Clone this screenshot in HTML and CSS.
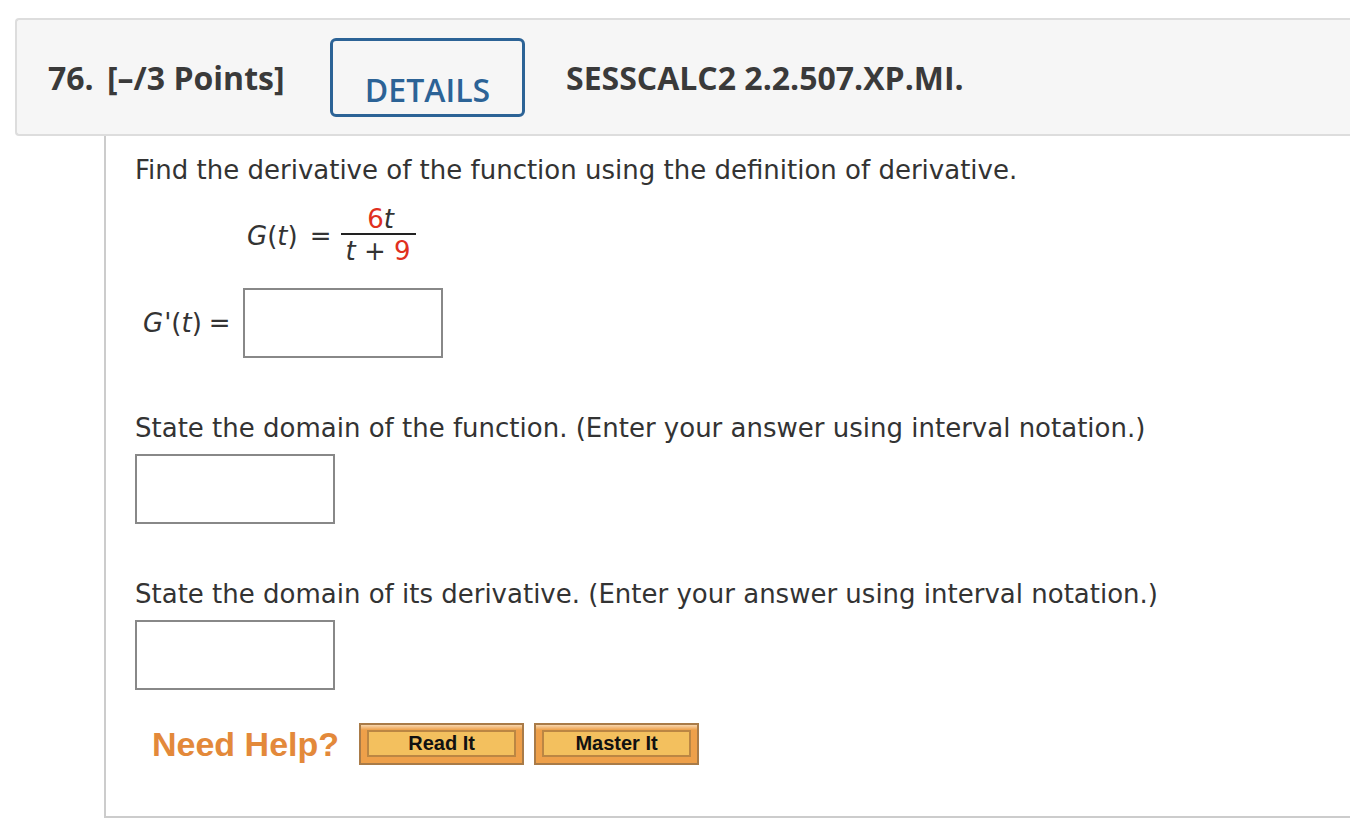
FILE: index.html
```html
<!DOCTYPE html>
<html>
<head>
<meta charset="utf-8">
<link rel="stylesheet" href="styles.css">
</head>
<body>
<div class="question">
  <div class="qhead">
    <span class="qnum">76.</span>
    <span class="qpts">[–/3 Points]</span>
    <span class="details">DETAILS</span>
    <span class="qref">SESSCALC2 2.2.507.XP.MI.</span>
  </div>
  <div class="qbody">
    <p class="prompt first">Find the derivative of the function using the definition of derivative.</p>
    <div class="eq">
      <span class="lhs"><span class="mi">G</span>(<span class="mi">t</span>)</span>
      <span class="eqsign">=</span>
      <span class="frac">
        <span class="num"><span class="red">6</span><span class="mi">t</span></span>
        <span class="den"><span class="mi">t</span> + <span class="red">9</span></span>
      </span>
    </div>
    <div class="answer-row">
      <span class="alhs"><span class="mi">G</span><span class="prime">'</span>(<span class="mi">t</span>)</span>
      <span class="eqsign">=</span>
      <span class="input"></span>
    </div>
    <p class="prompt gap">State the domain of the function. (Enter your answer using interval notation.)</p>
    <div class="input block"></div>
    <p class="prompt gap">State the domain of its derivative. (Enter your answer using interval notation.)</p>
    <div class="input block"></div>
    <div class="help">
      <span class="needhelp">Need Help?</span>
      <span class="btn"><span>Read It</span></span>
      <span class="btn"><span>Master It</span></span>
    </div>
  </div>
</div>
</body>
</html>
```
FILE: styles.css
```css
html, body {
  margin: 0;
  padding: 0;
  background: #ffffff;
}
.question {
  padding-top: 18px;
  padding-left: 15px;
}
.qhead {
  box-sizing: border-box;
  height: 118px;
  background: #f6f6f6;
  border: 2px solid #dddddd;
  border-right: none;
  border-radius: 4px 0 0 4px;
  display: flex;
  align-items: center;
  padding-left: 31px;
  font-family: "Open Sans", sans-serif;
  font-weight: 700;
  font-size: 32px;
  color: #3a3a3a;
  width: 1400px;
}
.qnum {
  width: 59px;
}
.qpts {
  width: 223px;
  white-space: nowrap;
}
.details {
  box-sizing: border-box;
  width: 195px;
  height: 79px;
  border: 3px solid #2c6396;
  border-radius: 6px;
  color: #2c6396;
  font-weight: 600;
  font-size: 32px;
  display: flex;
  justify-content: center;
  align-items: flex-end;
  padding-bottom: 3px;
  margin-right: 41px;
}
.qref {
  white-space: nowrap;
}
.qbody {
  margin-left: 89px;
  border-left: 2px solid #cccccc;
  border-bottom: 2px solid #cccccc;
  padding: 18px 0 51px 29px;
  font-family: "DejaVu Sans", Verdana, sans-serif;
  font-size: 26px;
  color: #333333;
}
.prompt {
  margin: 0;
  line-height: 32px;
  white-space: nowrap;
}
.prompt.gap {
  margin-top: 54px;
}
.mi {
  font-style: italic;
}
.prime {
  margin-left: 1px;
}
.red {
  color: #e0301e;
}
.eq {
  margin-top: 19px;
  margin-left: 112px;
  display: flex;
  align-items: center;
}
.eqsign {
  margin: 0 10px 0 12px;
}
.frac {
  display: inline-flex;
  flex-direction: column;
  align-items: stretch;
  text-align: center;
}
.num {
  line-height: 28px;
  padding: 0 4px 0 8px;
  border-bottom: 2px solid #222222;
}
.den {
  line-height: 30px;
  padding: 1px 5px 0 4px;
}
.answer-row {
  margin-top: 22px;
  margin-left: 8px;
  display: flex;
  align-items: center;
}
.answer-row .eqsign {
  margin: 0 12px 0 7px;
}
.input {
  box-sizing: border-box;
  display: inline-block;
  width: 200px;
  height: 70px;
  border: 2px solid #888888;
  background: #ffffff;
}
.input.block {
  display: block;
  margin-top: 10px;
}
.help {
  margin-top: 33px;
  margin-left: 17px;
  display: flex;
  align-items: center;
}
.needhelp {
  font-family: "Liberation Sans", Arial, sans-serif;
  font-weight: 700;
  font-size: 34px;
  color: #e3893a;
  margin-right: 20px;
}
.btn {
  box-sizing: border-box;
  width: 165px;
  height: 42px;
  border: 2px solid #a97b48;
  background: linear-gradient(#f7d6ae 0, #eea04a 5px, #eea04a 100%);
  padding: 5px 6px 6px 6px;
  display: flex;
  margin-right: 10px;
}
.btn span {
  flex: 1;
  box-sizing: border-box;
  border: 2px solid #bb8643;
  background: #f3c05e;
  display: flex;
  align-items: center;
  justify-content: center;
  font-family: "Liberation Sans", Arial, sans-serif;
  font-weight: 700;
  font-size: 20px;
  color: #111111;
}
```
